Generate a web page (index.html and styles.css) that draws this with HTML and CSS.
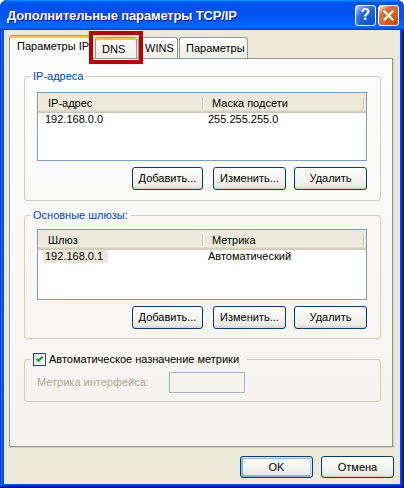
FILE: index.html
```html
<!DOCTYPE html>
<html lang="ru">
<head>
<meta charset="utf-8">
<title>Дополнительные параметры TCP/IP</title>
<link rel="stylesheet" href="styles.css">
</head>
<body>
<div class="window">
  <div class="titlebar">
    <span class="title">Дополнительные параметры TCP/IP</span>
    <div class="caps">
      <div class="cap help">?</div>
      <div class="cap close">
        <svg width="11" height="11" viewBox="0 0 11 11"><path d="M1.5 1.5 L9.5 9.5 M9.5 1.5 L1.5 9.5" stroke="#fff" stroke-width="2.2" stroke-linecap="square"/></svg>
      </div>
    </div>
  </div>
  <div class="client">
    <div class="tabs">
      <div class="tab active">Параметры IP</div>
      <div class="tab t-dns hot">DNS</div>
      <div class="tab t-wins">WINS</div>
      <div class="tab t-par">Параметры</div>
      <div class="mark"></div>
    </div>
    <div class="panel">
      <fieldset class="group g1">
        <legend>IP-адреса</legend>
        <div class="list l1">
          <div class="lhead">
            <div class="hc hc1">IP-адрес</div>
            <div class="hc hc2">Маска подсети</div>
          </div>
          <div class="lrow">
            <div class="cell cell1"><span class="txt">192.168.0.0</span></div>
            <div class="cell cell2">255.255.255.0</div>
          </div>
        </div>
        <div class="btnrow">
          <button class="btn b-add">Добавить...</button>
          <button class="btn b-edit">Изменить...</button>
          <button class="btn b-del">Удалить</button>
        </div>
      </fieldset>
      <fieldset class="group g2">
        <legend>Основные шлюзы:</legend>
        <div class="list l2">
          <div class="lhead">
            <div class="hc hc1">Шлюз</div>
            <div class="hc hc2">Метрика</div>
          </div>
          <div class="lrow">
            <div class="cell cell1"><span class="txt sel">192.168.0.1</span></div>
            <div class="cell cell2">Автоматический</div>
          </div>
        </div>
        <div class="btnrow">
          <button class="btn b-add">Добавить...</button>
          <button class="btn b-edit">Изменить...</button>
          <button class="btn b-del">Удалить</button>
        </div>
      </fieldset>
      <fieldset class="group g3">
        <legend class="chklegend">
          <svg class="chk" width="13" height="13" viewBox="0 0 13 13">
            <defs><linearGradient id="cg" x1="0" y1="0" x2="1" y2="1"><stop offset="0" stop-color="#DCDCD7"/><stop offset="1" stop-color="#FFFFFF"/></linearGradient></defs>
            <rect x="0.5" y="0.5" width="12" height="12" fill="url(#cg)" stroke="#1C5180"/>
            <path d="M3.5 5.8 L5.5 7.8 L9.6 3.7" fill="none" stroke="#21A121" stroke-width="2.2"/>
          </svg>
          <span>Автоматическое назначение метрики</span>
        </legend>
        <div class="metric">
          <span class="mlabel">Метрика интерфейса:</span>
          <div class="minput"></div>
        </div>
      </fieldset>
    </div>
    <div class="footer">
      <button class="btn fbtn default">OK</button>
      <button class="btn fbtn">Отмена</button>
    </div>
  </div>
</div>
</body>
</html>
```
FILE: styles.css
```css
* { box-sizing: border-box; }
html, body { margin: 0; padding: 0; background: #ffffff; }
body {
  font-family: "Liberation Sans", Arial, sans-serif;
  font-size: 11px;
  line-height: 13px;
  color: #000;
}

.window {
  width: 404px;
  height: 488px;
  display: flex;
  flex-direction: column;
  background: #0055E5;
  border-radius: 8px 8px 0 0;
  box-shadow: inset -1px -1px #00138c, inset 1px 1px #0831d9, inset -2px -2px #001ea0, inset 2px 2px #166aee, inset -3px -3px #003bda, inset 3px 3px #0855dd;
}

.titlebar {
  height: 30px;
  flex: none;
  display: flex;
  align-items: center;
  justify-content: space-between;
  padding: 0 5px 0 7px;
  border-radius: 8px 8px 0 0;
  background: linear-gradient(180deg, #0997ff, #0053ee 8%, #0050ee 40%, #0066ff 88%, #0066ff 93%, #005bff 95%, #003dd7 96%, #003dd7);
}
.title {
  color: #fff;
  font-weight: bold;
  font-size: 13px;
  line-height: 16px;
  letter-spacing: -0.15px;
  text-shadow: 1px 1px #0f1089;
  padding-top: 1px;
}
.caps { display: flex; gap: 2px; }
.cap {
  width: 21px;
  height: 21px;
  border: 1px solid #fff;
  border-radius: 3px;
  display: flex;
  align-items: center;
  justify-content: center;
}
.help {
  background: radial-gradient(circle at 90% 90%, #0054e9 0%, #2263d5 55%, #4479e4 70%, #a3bbec 90%, #fff 100%);
  color: #fff;
  font-weight: bold;
  font-size: 16px;
  line-height: 16px;
}
.close {
  background: radial-gradient(circle at 90% 90%, #cc4600 0%, #dc6527 55%, #cd7546 70%, #ffccb2 90%, #fff 100%);
}

.client {
  flex: 1;
  margin: 0 4px 4px 4px;
  background: #ECE9D8;
  padding: 5px 7px 0 5px;
  display: flex;
  flex-direction: column;
}

.tabs {
  position: relative;
  display: flex;
  align-items: flex-end;
  height: 23px;
  flex: none;
}
.tab {
  height: 21px;
  border: 1px solid #919B9C;
  border-bottom: none;
  border-radius: 3px 3px 0 0;
  background: linear-gradient(180deg, #fff 0%, #fafaf9 26%, #f0f0ea 95%, #ecebe5 100%);
  padding: 4px 0 0 6px;
  white-space: nowrap;
}
.tab.active {
  position: relative;
  z-index: 1;
  width: 83px;
  height: 24px;
  margin-bottom: -1px;
  padding: 4px 0 0 7px;
  background: #FCFCFE;
  border-top-color: #E68B2C;
  box-shadow: inset 0 2px #FFC73C;
}
.tab.hot {
  border-top-color: #E68B2C;
  box-shadow: inset 0 2px #FFC73C;
  padding-top: 5px;
}
.t-dns { width: 42px; margin-left: 3px; }
.t-wins { width: 40px; margin-left: 1px; }
.t-par { width: 69px; margin-left: 1px; }
.mark {
  position: absolute;
  z-index: 3;
  left: 80px;
  top: -4px;
  width: 54px;
  height: 33px;
  border: 4px solid #BF0000;
}

.panel {
  height: 389px;
  flex: none;
  border: 1px solid #919B9C;
  background: linear-gradient(180deg, #FCFCFE, #F4F3EE);
  box-shadow: 1px 1px #D0CEBF;
}

.group {
  margin: 0 0 0 14px;
  width: 357px;
  min-width: 0;
  border: 1px solid #D0D0BF;
  border-radius: 3px;
  padding: 0 0 10px 6px;
}
.group legend {
  color: #0046D5;
  padding: 0 3px 0 2px;
  line-height: 13px;
}
.g1 { margin-top: 11px; }
.g1 .list { margin-top: 9px; height: 69px; }
.g2 { margin-top: 8px; padding-bottom: 9px; }
.g2 .list { margin-top: 7px; height: 71px; }
.g3 { margin-top: 14px; padding-bottom: 8px; }

.chklegend {
  display: flex;
  align-items: center;
  gap: 3px;
  color: #000 !important;
  padding-right: 8px !important;
}
.chk { display: block; flex: none; }

.list {
  width: 330px;
  margin-left: 6px;
  border: 1px solid #7F9DB9;
  background: #fff;
}
.lhead {
  display: flex;
  height: 20px;
  background: #EBEADB;
  box-shadow: inset 0 -1px #CBC7B8, inset 0 -2px #D6D2C2, inset 0 -3px #E2DECD;
}
.hc {
  padding-top: 4px;
  background:
    linear-gradient(#C7C5B2, #C7C5B2) right 1px top 4px / 1px 12px no-repeat,
    linear-gradient(#FFFFFF, #FFFFFF) right 0 top 4px / 1px 12px no-repeat;
}
.hc1 { width: 166px; padding-left: 10px; }
.hc2 { width: 161px; padding-left: 8px; }
.lrow { display: flex; height: 13px; }
.cell1 { width: 165px; padding-left: 5px; }
.cell2 { padding-left: 5px; }
.txt { display: inline-block; padding: 0 2px; }
.txt.sel { background: #ECE9D8; width: 65px; }

.btnrow {
  width: 330px;
  margin: 6px 0 0 6px;
  display: flex;
  justify-content: flex-end;
}
.btn {
  font-family: inherit;
  font-size: 11px;
  line-height: 13px;
  color: #000;
  height: 23px;
  padding: 0;
  border: 1px solid #003c74;
  border-radius: 3px;
  background: linear-gradient(180deg, #fff, #ecebe5 86%, #d8d0c4);
}
.b-add { width: 71px; }
.b-edit { width: 73px; margin-left: 10px; }
.b-del { width: 73px; margin-left: 8px; }

.metric {
  margin: 6px 0 0 6px;
  display: flex;
  align-items: center;
}
.mlabel { width: 132px; color: #ACA899; }
.minput {
  width: 76px;
  height: 21px;
  border: 1px solid #A5B3C6;
  background: #F5F4EF;
}

.footer {
  display: flex;
  justify-content: flex-end;
  gap: 8px;
  margin: 9px -1px 0 0;
}
.fbtn { width: 73px; height: 22px; }
.default {
  box-shadow: inset -1px 1px #cee7ff, inset 1px 2px #98b8ea, inset -2px 2px #bcd4f6, inset 1px -1px #89ade4, inset 2px -2px #89ade4;
}
```
